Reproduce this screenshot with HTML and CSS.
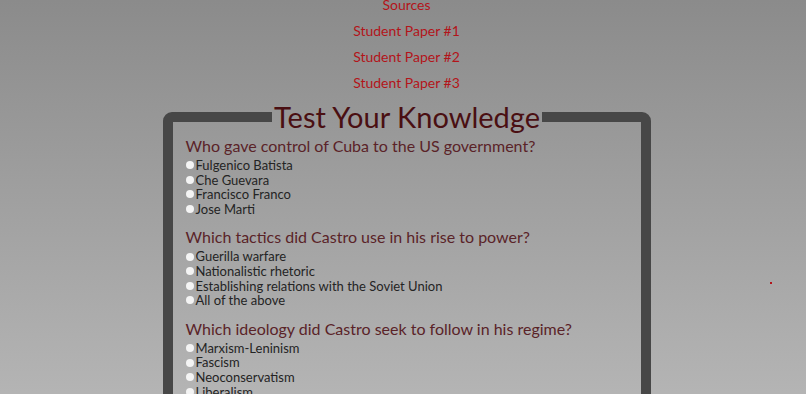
FILE: index.html
```html
<!DOCTYPE html>
<html>
<head>
	<title>Cuban Revolution - Quiz</title>
	<link rel="stylesheet" href="styles.css">
</head>
<body>
	<div class="links">
		<a href="#">Sources</a>
		<a href="#">Student Paper #1</a>
		<a href="#">Student Paper #2</a>
		<a href="#">Student Paper #3</a>
	</div>
	<form class="quiz">
		<fieldset>
			<legend>Test Your Knowledge</legend>
			<div class="question">
				<p class="ask">Who gave control of Cuba to the US government?</p>
				<label><input type="radio" name="q1"> Fulgenico Batista</label>
				<label><input type="radio" name="q1"> Che Guevara</label>
				<label><input type="radio" name="q1"> Francisco Franco</label>
				<label><input type="radio" name="q1"> Jose Marti</label>
			</div>
			<div class="question">
				<p class="ask">Which tactics did Castro use in his rise to power?</p>
				<label><input type="radio" name="q2"> Guerilla warfare</label>
				<label><input type="radio" name="q2"> Nationalistic rhetoric</label>
				<label><input type="radio" name="q2"> Establishing relations with the Soviet Union</label>
				<label><input type="radio" name="q2"> All of the above</label>
			</div>
			<div class="question">
				<p class="ask">Which ideology did Castro seek to follow in his regime?</p>
				<label><input type="radio" name="q3"> Marxism-Leninism</label>
				<label><input type="radio" name="q3"> Fascism</label>
				<label><input type="radio" name="q3"> Neoconservatism</label>
				<label><input type="radio" name="q3"> Liberalism</label>
			</div>
		</fieldset>
	</form>
	<span class="dot"></span>
</body>
</html>
```

FILE: styles.css
```css
html{
	background: linear-gradient(#8b8b8b, #b9b9b9);
	min-height: 100%;
}
body{
	margin: 0;
	padding-left: 7px;
	font-family: Lato, "Liberation Sans", sans-serif;
	min-height: 394px;
}
.links{
	margin-top: -4px;
	display: flex;
	flex-direction: column;
	align-items: center;
	gap: 8px;
}
.links a{
	color: #b3141a;
	text-decoration: none;
	font-size: 14px;
	line-height: 18px;
}
.quiz{
	width: 488px;
	margin: 10px auto 0;
}
fieldset{
	margin: 0;
	border: 10px solid #474747;
	border-radius: 9px;
	padding: 0 12px 20px 13px;
}
legend{
	margin: 0 auto;
	padding: 0 2px;
	font-size: 29px;
	line-height: 30px;
	color: #4a0f12;
}
.question{
	margin-bottom: 11px;
}
.ask{
	margin: 4px 0 2px;
	font-size: 16px;
	line-height: 20px;
	color: #5a2328;
}
label{
	display: flex;
	align-items: center;
	font-size: 13px;
	line-height: 14.6px;
	color: #242424;
}
input[type="radio"]{
	appearance: none;
	width: 8px;
	height: 8px;
	margin: 0 2px 0 0;
	border-radius: 50%;
	background: #f4f4f4;
}
.dot{
	position: absolute;
	left: 770px;
	top: 282px;
	width: 2px;
	height: 2px;
	background: #b3141a;
}
```
